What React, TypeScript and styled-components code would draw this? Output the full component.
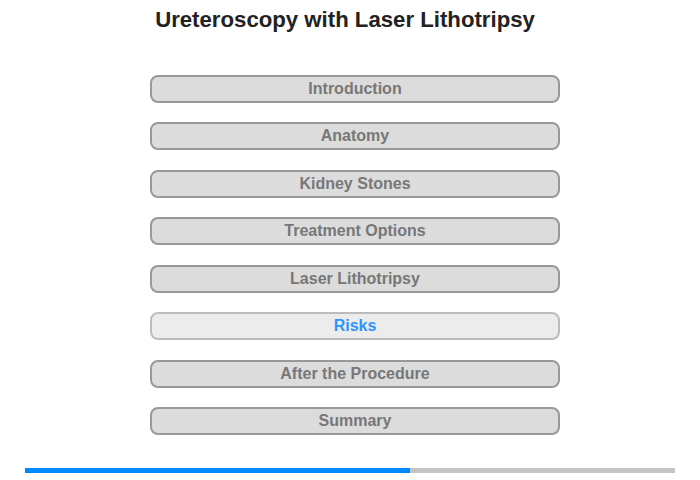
import React from "react";
import styled, { createGlobalStyle } from "styled-components";

const Global = createGlobalStyle`
  html, body { margin: 0; padding: 0; background: #fff; }
  body { font-family: "Liberation Sans", Arial, sans-serif; }
`;

const Page = styled.div`
  width: 700px;
  height: 480px;
  display: flex;
  flex-direction: column;
  align-items: center;
  box-sizing: border-box;
  padding-top: 7px;
`;

const Title = styled.h1`
  margin: 0;
  font-size: 22.2px;
  line-height: 26px;
  font-weight: bold;
  color: #222;
  margin-right: 10px;
`;

const Menu = styled.nav`
  display: flex;
  flex-direction: column;
  gap: 19.45px;
  margin-top: 42px;
  margin-left: 10px;
`;

const Item = styled.button<{ $active?: boolean }>`
  width: 410px;
  height: 28px;
  box-sizing: border-box;
  border: 2px solid ${(p) => (p.$active ? "#bcbcbc" : "#999")};
  border-radius: 8px;
  background: ${(p) => (p.$active ? "#ececec" : "#dcdcdc")};
  color: ${(p) => (p.$active ? "#2b95ff" : "#777")};
  font-family: "Liberation Sans", Arial, sans-serif;
  font-size: 16px;
  font-weight: bold;
  padding: 0;
  cursor: pointer;
`;

const Progress = styled.div`
  margin-top: auto;
  margin-bottom: 7px;
  width: 650px;
  height: 5px;
  background: #c4c4c4;
  display: flex;
`;

const Fill = styled.div`
  height: 100%;
  background: #0088ff;
`;

const items = [
  "Introduction",
  "Anatomy",
  "Kidney Stones",
  "Treatment Options",
  "Laser Lithotripsy",
  "Risks",
  "After the Procedure",
  "Summary",
];

export default function App() {
  return (
    <>
      <Global />
      <Page>
        <Title>Ureteroscopy with Laser Lithotripsy</Title>
        <Menu>
          {items.map((t) => (
            <Item key={t} $active={t === "Risks"}>
              {t}
            </Item>
          ))}
        </Menu>
        <Progress>
          <Fill style={{ width: `${(385 / 650) * 100}%` }} />
        </Progress>
      </Page>
    </>
  );
}
